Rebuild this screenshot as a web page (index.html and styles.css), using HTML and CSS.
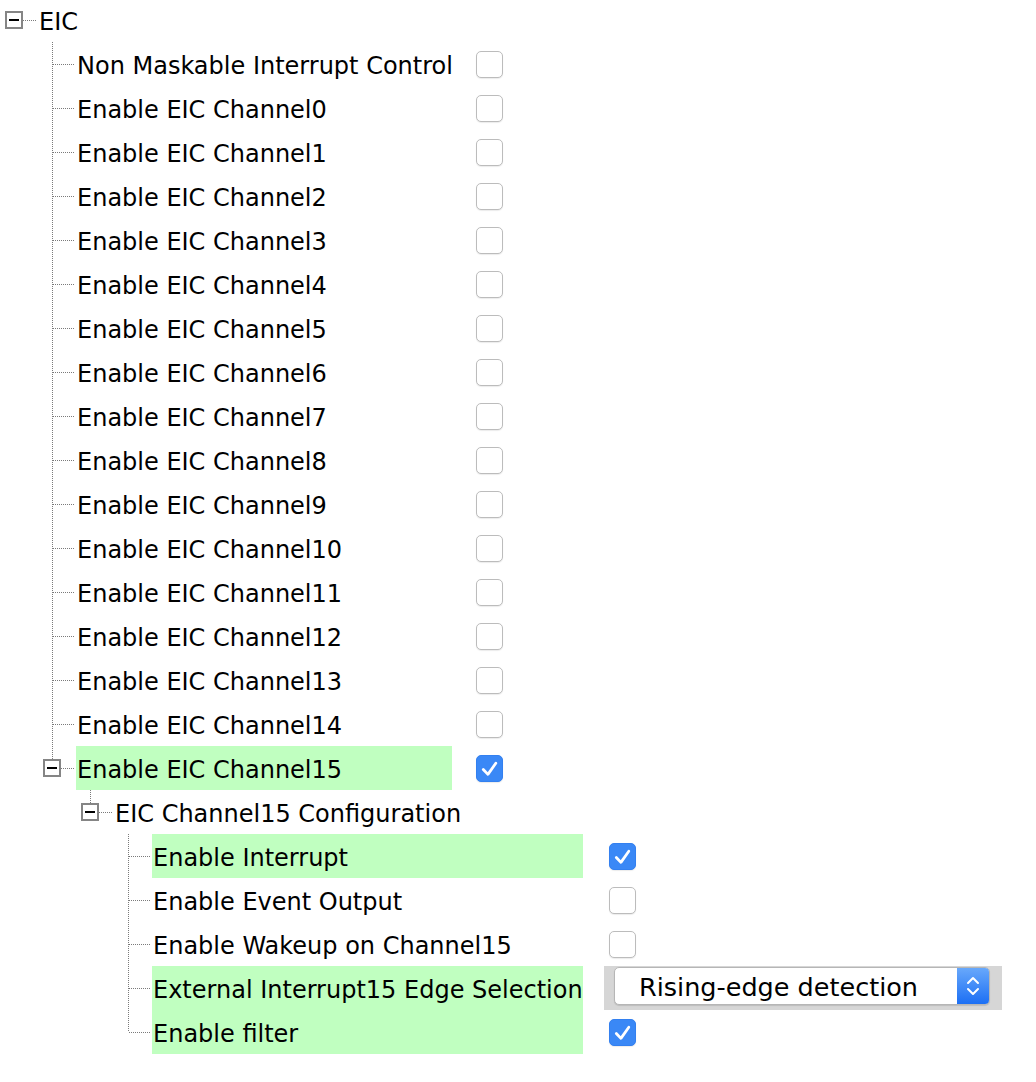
FILE: index.html
```html
<!DOCTYPE html>
<html>
<head>
<meta charset="utf-8">
<title>EIC</title>
<link rel="stylesheet" href="styles.css">
</head>
<body>
<div class="tree">
  <div class="row lv0"><span class="conn first exp-cell"><span class="exp"></span></span><span class="label">EIC</span></div>

  <div class="row lv1"><span class="conn mid"></span><span class="label w1">Non Maskable Interrupt Control</span><span class="val v1"><span class="cb"></span></span></div>
  <div class="row lv1"><span class="conn mid"></span><span class="label w1">Enable EIC Channel0</span><span class="val v1"><span class="cb"></span></span></div>
  <div class="row lv1"><span class="conn mid"></span><span class="label w1">Enable EIC Channel1</span><span class="val v1"><span class="cb"></span></span></div>
  <div class="row lv1"><span class="conn mid"></span><span class="label w1">Enable EIC Channel2</span><span class="val v1"><span class="cb"></span></span></div>
  <div class="row lv1"><span class="conn mid"></span><span class="label w1">Enable EIC Channel3</span><span class="val v1"><span class="cb"></span></span></div>
  <div class="row lv1"><span class="conn mid"></span><span class="label w1">Enable EIC Channel4</span><span class="val v1"><span class="cb"></span></span></div>
  <div class="row lv1"><span class="conn mid"></span><span class="label w1">Enable EIC Channel5</span><span class="val v1"><span class="cb"></span></span></div>
  <div class="row lv1"><span class="conn mid"></span><span class="label w1">Enable EIC Channel6</span><span class="val v1"><span class="cb"></span></span></div>
  <div class="row lv1"><span class="conn mid"></span><span class="label w1">Enable EIC Channel7</span><span class="val v1"><span class="cb"></span></span></div>
  <div class="row lv1"><span class="conn mid"></span><span class="label w1">Enable EIC Channel8</span><span class="val v1"><span class="cb"></span></span></div>
  <div class="row lv1"><span class="conn mid"></span><span class="label w1">Enable EIC Channel9</span><span class="val v1"><span class="cb"></span></span></div>
  <div class="row lv1"><span class="conn mid"></span><span class="label w1">Enable EIC Channel10</span><span class="val v1"><span class="cb"></span></span></div>
  <div class="row lv1"><span class="conn mid"></span><span class="label w1">Enable EIC Channel11</span><span class="val v1"><span class="cb"></span></span></div>
  <div class="row lv1"><span class="conn mid"></span><span class="label w1">Enable EIC Channel12</span><span class="val v1"><span class="cb"></span></span></div>
  <div class="row lv1"><span class="conn mid"></span><span class="label w1">Enable EIC Channel13</span><span class="val v1"><span class="cb"></span></span></div>
  <div class="row lv1"><span class="conn mid"></span><span class="label w1">Enable EIC Channel14</span><span class="val v1"><span class="cb"></span></span></div>
  <div class="row lv1"><span class="conn last exp-cell"><span class="exp"></span></span><span class="label w1 hl">Enable EIC Channel15</span><span class="val v1"><span class="cb on"><svg viewBox="0 0 27 27" width="25" height="25"><path d="M6.8 14.5 L11.8 19.8 L20.3 7.8" fill="none" stroke="#fff" stroke-width="3" stroke-linecap="round" stroke-linejoin="round"/></svg></span></span></div>

  <div class="row lv2"><span class="conn last exp-cell"><span class="exp"></span></span><span class="label">EIC Channel15 Configuration</span></div>

  <div class="row lv3"><span class="conn mid"></span><span class="label w3 hl">Enable Interrupt</span><span class="val v3"><span class="cb on"><svg viewBox="0 0 27 27" width="25" height="25"><path d="M6.8 14.5 L11.8 19.8 L20.3 7.8" fill="none" stroke="#fff" stroke-width="3" stroke-linecap="round" stroke-linejoin="round"/></svg></span></span></div>
  <div class="row lv3"><span class="conn mid"></span><span class="label w3">Enable Event Output</span><span class="val v3"><span class="cb"></span></span></div>
  <div class="row lv3"><span class="conn mid"></span><span class="label w3">Enable Wakeup on Channel15</span><span class="val v3"><span class="cb"></span></span></div>
  <div class="row lv3"><span class="conn mid"></span><span class="label w3 hl">External Interrupt15 Edge Selection</span><span class="val v3 selwrap"><span class="select"><span class="seltext">Rising-edge detection</span><span class="stepper"><svg viewBox="0 0 32 36" width="32" height="36"><path d="M11 15 L16 10 L21 15 M11 21 L16 26 L21 21" fill="none" stroke="#fff" stroke-width="2" stroke-linecap="round" stroke-linejoin="round"/></svg></span></span></span></div>
  <div class="row lv3"><span class="conn last"></span><span class="label w3 hl">Enable filter</span><span class="val v3"><span class="cb on"><svg viewBox="0 0 27 27" width="25" height="25"><path d="M6.8 14.5 L11.8 19.8 L20.3 7.8" fill="none" stroke="#fff" stroke-width="3" stroke-linecap="round" stroke-linejoin="round"/></svg></span></span></div>
</div>
</body>
</html>
```

FILE: styles.css
```css
html, body {
  margin: 0;
  padding: 0;
  background: #ffffff;
}

.tree {
  margin-top: -2px;
  font-family: "DejaVu Sans", Verdana, sans-serif;
  font-size: 24px;
  color: #000;
}

.row {
  display: flex;
  align-items: center;
  height: 44px;
}

.lv0 { padding-left: 0; }
.lv1 { padding-left: 38px; }
.lv2 { padding-left: 76px; }
.lv3 { padding-left: 114px; }

.conn {
  flex: none;
  box-sizing: border-box;
  width: 38px;
  height: 44px;
  display: flex;
  align-items: center;
  padding-left: 5px;
  background-repeat: no-repeat;
  background-image: repeating-linear-gradient(to right, #7a7a7a 0 1px, transparent 1px 2px);
  background-position: 15px 22px;
  background-size: 22px 1px;
}

.conn.mid {
  background-image:
    repeating-linear-gradient(to right, #7a7a7a 0 1px, transparent 1px 2px),
    repeating-linear-gradient(to bottom, #7a7a7a 0 1px, transparent 1px 2px);
  background-position: 15px 22px, 14px 0;
  background-size: 22px 1px, 1px 44px;
}

.conn.last {
  background-image:
    repeating-linear-gradient(to right, #7a7a7a 0 1px, transparent 1px 2px),
    repeating-linear-gradient(to bottom, #7a7a7a 0 1px, transparent 1px 2px);
  background-position: 15px 22px, 14px 0;
  background-size: 22px 1px, 1px 22px;
}

.exp {
  box-sizing: border-box;
  width: 18px;
  height: 18px;
  border: 2px solid #858585;
  background: #fff;
  display: flex;
  align-items: center;
  justify-content: center;
}

.exp::before {
  content: "";
  width: 10px;
  height: 2px;
  background: #000;
}

.label {
  flex: none;
  box-sizing: border-box;
  height: 44px;
  line-height: 44px;
  padding-top: 2px;
  padding-left: 1px;
  white-space: nowrap;
}

.w1 { width: 376px; }
.w3 { width: 431px; }

.hl { background: #c0ffc0; }

.val {
  flex: none;
  display: flex;
  align-items: center;
  padding-left: 5px;
}

.v1 { margin-left: 19px; }
.v3 { margin-left: 21px; }

.cb {
  box-sizing: border-box;
  width: 27px;
  height: 27px;
  border: 1px solid #bcbcbc;
  border-radius: 5px;
  background: #fff;
  box-shadow: 0 1px 1px rgba(0, 0, 0, 0.08);
  display: flex;
  align-items: center;
  justify-content: center;
}

.cb.on {
  background: #3a88f6;
  border-color: #3380f0;
}

.selwrap {
  box-sizing: border-box;
  width: 398px;
  height: 44px;
  padding: 1px 12px 5px 10px;
  background: #d6d6d6;
  align-items: stretch;
}

.select {
  flex: 1;
  display: flex;
  box-sizing: border-box;
  border: 1px solid #b6b6b6;
  border-radius: 5px;
  background: #fff;
  overflow: hidden;
  box-shadow: 0 1px 1px rgba(0, 0, 0, 0.12);
}

.seltext {
  flex: 1;
  padding-top: 2px;
  padding-left: 24px;
  font-size: 25.5px;
  line-height: 34px;
  white-space: nowrap;
}

.stepper {
  flex: none;
  width: 32px;
  display: flex;
  align-items: center;
  justify-content: center;
  background: linear-gradient(to bottom, #68a8fb, #1c6ff4);
}
```
